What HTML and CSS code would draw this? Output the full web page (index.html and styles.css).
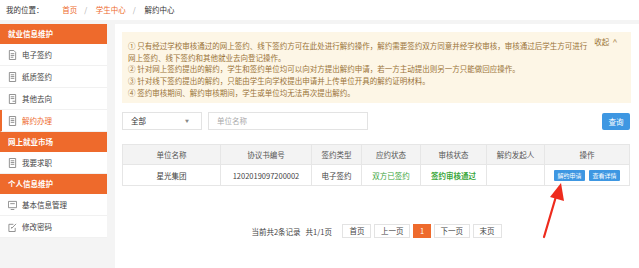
FILE: index.html
```html
<!DOCTYPE html>
<html lang="zh-CN">
<head>
    <meta charset="UTF-8">
    <title>解约中心</title>
    <link rel="stylesheet" href="styles.css">
</head>
<body>
    <div class="crumbs">
        <span class="crumbs-label">我的位置：</span>
        <a class="crumb-link">首页</a><span class="sep">/</span>
        <a class="crumb-link">学生中心</a><span class="sep">/</span>
        <span class="crumb-current">解约中心</span>
    </div>

    <div class="layout">
        <div class="sidebar">
            <div class="side-head">就业信息维护</div>
            <div class="side-item"><svg class="ico" viewBox="0 0 10 11"><path d="M1.5 .5h5l2 2v8h-7z M3 4h4 M3 6h4 M3 8h3" /></svg>电子签约</div>
            <div class="side-item"><svg class="ico" viewBox="0 0 10 11"><path d="M1.5 .5h7v10h-7z M3 3h4 M3 5h4 M3 7h4" /></svg>纸质签约</div>
            <div class="side-item"><svg class="ico" viewBox="0 0 10 11"><path d="M1.5 .5h7v10h-7z M3 3h4 M3 5h4 M5 8h3" /></svg>其他去向</div>
            <div class="side-item active"><svg class="ico" viewBox="0 0 10 11"><path d="M1.5 .5h7v10h-7z M3 3h4 M3 5h4 M3 7h4" /></svg>解约办理</div>
            <div class="side-head">网上就业市场</div>
            <div class="side-item"><svg class="ico" viewBox="0 0 10 11"><path d="M1.5 .5h7v10h-7z M3 3h4 M3 5h4 M3 7h4" /></svg>我要求职</div>
            <div class="side-head">个人信息维护</div>
            <div class="side-item"><svg class="ico" viewBox="0 0 10 11"><path d="M.5 1.5h9v7h-9z M3 10.5h4 M2.5 4h5" /></svg>基本信息管理</div>
            <div class="side-item"><svg class="ico" viewBox="0 0 10 11"><path d="M1 2.5h5 M1 2.5v8h7v-4 M4 7l5-5 M4 7v-1.5" /></svg>修改密码</div>
        </div>

        <div class="main">
            <div class="notice">
                <div class="notice-text">
                    ① 只有经过学校审核通过的网上签约、线下签约方可在此处进行解约操作，解约需要签约双方同意并经学校审核，审核通过后学生方可进行<br>
                    网上签约、线下签约和其他就业去向登记操作。<br>
                    ② 针对网上签约提出的解约，学生和签约单位均可以向对方提出解约申请，若一方主动提出则另一方只能做回应操作。<br>
                    ③ 针对线下签约提出的解约，只能由学生向学校提出申请并上传单位开具的解约证明材料。<br>
                    ④ 签约审核期间、解约审核期间，学生或单位均无法再次提出解约。
                </div>
                <div class="notice-toggle">收起 <span class="caret">^</span></div>
            </div>

            <div class="search">
                <div class="select">全部<span class="select-arrow">▼</span></div>
                <div class="input">单位名称</div>
                <div class="btn-query">查询</div>
            </div>

            <table class="grid">
                <thead>
                    <tr>
                        <th class="c1">单位名称</th>
                        <th class="c2">协议书编号</th>
                        <th class="c3">签约类型</th>
                        <th class="c4">应约状态</th>
                        <th class="c5">审核状态</th>
                        <th class="c6">解约发起人</th>
                        <th class="c7">操作</th>
                    </tr>
                </thead>
                <tbody>
                    <tr>
                        <td>星光集团</td>
                        <td>1202019097200002</td>
                        <td>电子签约</td>
                        <td class="green">双方已签约</td>
                        <td class="green bold">签约审核通过</td>
                        <td></td>
                        <td><span class="btn-small">解约申请</span><span class="btn-small">查看详情</span></td>
                    </tr>
                </tbody>
            </table>

            <div class="pager">
                <span class="pager-info">当前共2条记录&nbsp;&nbsp;&nbsp;共1/1页</span>
                <span class="page">首页</span>
                <span class="page">上一页</span>
                <span class="page current">1</span>
                <span class="page">下一页</span>
                <span class="page">末页</span>
            </div>
        </div>
    </div>

    <svg class="arrow" width="40" height="70" viewBox="0 0 40 70">
        <line x1="4" y1="56" x2="17" y2="12" stroke="#ee2b1d" stroke-width="2.2" stroke-linecap="round" />
        <polygon points="21,2 24,20 10,16" fill="#ee2b1d" />
    </svg>
</body>
</html>
```

FILE: styles.css
```css
body {
    margin: 0;
    width: 639px;
    height: 268px;
    overflow: hidden;
    background: #f4f4f4;
    font-family: "Noto Sans CJK SC", "Noto Sans", sans-serif;
    font-size: 7.5px;
    color: #333;
    position: relative;
}
.crumbs {
    height: 20px;
    line-height: 20px;
    padding-left: 6px;
    background: #fff;
    color: #333;
}
.crumbs-label {
    margin-right: 17px;
}
.crumb-link {
    color: #ee6a2c;
}
.sep {
    color: #aaa;
    margin: 0 7px;
}
.layout {
    display: flex;
    align-items: flex-start;
    gap: 8px;
    margin-top: 4px;
}
.sidebar {
    width: 107px;
    background: #fff;
}
.side-head {
    height: 20px;
    line-height: 20px;
    padding-left: 8px;
    background: #ee6a2c;
    color: #fff;
    font-weight: bold;
}
.side-item {
    display: flex;
    align-items: center;
    height: 21px;
    padding-left: 8px;
    border-bottom: 1px solid #f1f1f1;
    color: #444;
}
.side-item.active {
    color: #ee6a2c;
    border-left: 2px solid #ee6a2c;
    padding-left: 6px;
}
.ico {
    width: 9px;
    height: 10px;
    margin-right: 5px;
    fill: none;
    stroke: #888;
    stroke-width: 1;
}
.main {
    flex: 1;
    height: 244px;
    background: #fff;
    padding: 8px 8px 0 7px;
}
.notice {
    display: flex;
    height: 71px;
    box-sizing: border-box;
    padding: 8px 14px 0 6px;
    background: #fdf6e6;
    color: #9a7338;
}
.notice-text {
    flex: 1;
    line-height: 11.7px;
}
.notice-toggle {
    margin-top: -4px;
}
.caret {
    display: inline-block;
    transform: scaleX(1.3);
    margin-left: 2px;
    color: #b39463;
}
.search {
    display: flex;
    align-items: center;
    margin-top: 9px;
}
.select, .input {
    height: 18px;
    box-sizing: border-box;
    border: 1px solid #e3e3e3;
    line-height: 16px;
}
.select {
    width: 80px;
    padding: 0 8px;
    display: flex;
    justify-content: space-between;
}
.select-arrow {
    font-size: 4px;
    color: #888;
    margin-right: 4px;
}
.input {
    width: 160px;
    margin-left: 6px;
    padding-left: 8px;
    color: #aaa;
}
.btn-query {
    margin-left: auto;
    margin-right: 1px;
    width: 28px;
    height: 17px;
    line-height: 17px;
    text-align: center;
    background: #3e97e2;
    color: #fff;
    border-radius: 2px;
}
.grid {
    margin-top: 14px;
    width: 508px;
    border-collapse: collapse;
    table-layout: fixed;
    text-align: center;
}
.grid th, .grid td {
    border: 1px solid #e6e6e6;
    padding: 0;
    font-weight: normal;
}
.grid th {
    height: 19px;
    background: #f3f3f3;
    color: #555;
}
.grid td {
    height: 20px;
    color: #444;
}
.c1 { width: 97px; }
.c2 { width: 90px; }
.c3 { width: 49px; }
.c4 { width: 58px; }
.c5 { width: 65px; }
.c6 { width: 57px; }
.grid td.green {
    color: #3aa63a;
}
.grid td.bold {
    font-weight: bold;
}
.btn-small {
    display: inline-block;
    width: 31px;
    height: 11px;
    line-height: 11px;
    margin: 0 2px;
    background: #3e97e2;
    color: #fff;
    font-size: 6px;
    border-radius: 1px;
}
.pager {
    display: flex;
    justify-content: center;
    align-items: center;
    gap: 2.5px;
    margin-top: 38px;
}
.pager-info {
    margin-right: 8px;
    color: #444;
}
.page {
    height: 14px;
    line-height: 12px;
    box-sizing: border-box;
    padding: 0 6px;
    border: 1px solid #e3e3e3;
    color: #444;
}
.page.current {
    background: #ee6a2c;
    border-color: #ee6a2c;
    color: #fff;
}
.arrow {
    position: absolute;
    left: 540px;
    top: 181px;
}
```
